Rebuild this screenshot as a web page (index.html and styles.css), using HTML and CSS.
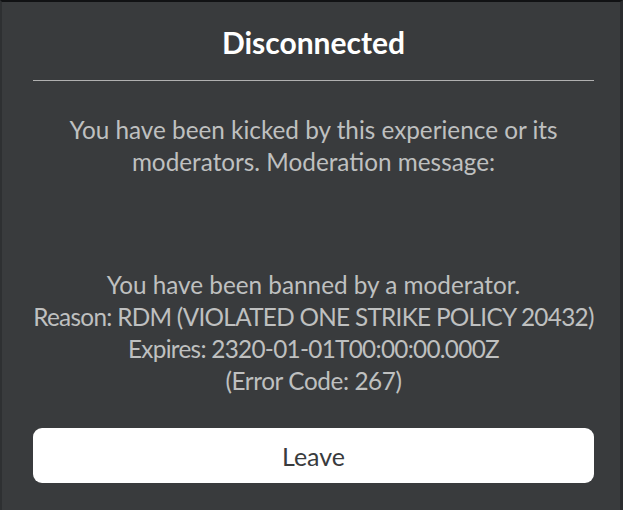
FILE: index.html
```html
<!DOCTYPE html>
<html>
<head>
<meta charset="utf-8">
<link rel="stylesheet" href="styles.css">
</head>
<body>
<div class="frame">
  <div class="dialog">
    <div class="header">
      <h1 class="title">Disconnected</h1>
    </div>
    <div class="divider"></div>
    <div class="msg kicked">
      <span class="line">You have been kicked by this experience or its</span>
      <span class="line">moderators. Moderation message:</span>
    </div>
    <div class="msg reason">
      <span class="line">You have been banned by a moderator.</span>
      <span class="line tight">Reason: RDM (VIOLATED ONE STRIKE POLICY 20432)</span>
      <span class="line tight">Expires: 2320-01-01T00:00:00.000Z</span>
      <span class="line snug">(Error Code: 267)</span>
    </div>
    <button class="leave">Leave</button>
  </div>
</div>
</body>
</html>
```

FILE: styles.css
```css
html, body {
  margin: 0;
  padding: 0;
  background: #393b3d;
}
.frame {
  width: 623px;
  height: 510px;
  box-sizing: border-box;
  border-top: 2px solid #111214;
  border-left: 2px solid #2e3032;
  border-right: 3px solid #2a2c2e;
  background: #393b3d;
  overflow: hidden;
}
.dialog {
  padding: 0 26px 0 31px;
  display: flex;
  flex-direction: column;
  align-items: stretch;
  font-family: Lato, "Liberation Sans", sans-serif;
}
.header {
  height: 78px;
  padding-top: 24px;
  box-sizing: border-box;
}
.title {
  margin: 0;
  text-align: center;
  color: #ffffff;
  font-size: 30px;
  font-weight: 700;
  line-height: 32px;
}
.divider {
  height: 1px;
  background: #b0b0b0;
}
.msg {
  display: flex;
  flex-direction: column;
  align-items: center;
  color: #bfc0c0;
  font-size: 24.3px;
  line-height: 32px;
}
.line {
  white-space: nowrap;
}
.tight {
  letter-spacing: -0.7px;
}
.snug {
  letter-spacing: -0.4px;
}
.kicked {
  margin-top: 33px;
}
.reason {
  margin-top: 91px;
}
.leave {
  margin-top: 31px;
  height: 55px;
  border: none;
  border-radius: 9px;
  background: #ffffff;
  color: #393b3d;
  font-family: Lato, "Liberation Sans", sans-serif;
  font-size: 25px;
  padding: 0;
}
```
